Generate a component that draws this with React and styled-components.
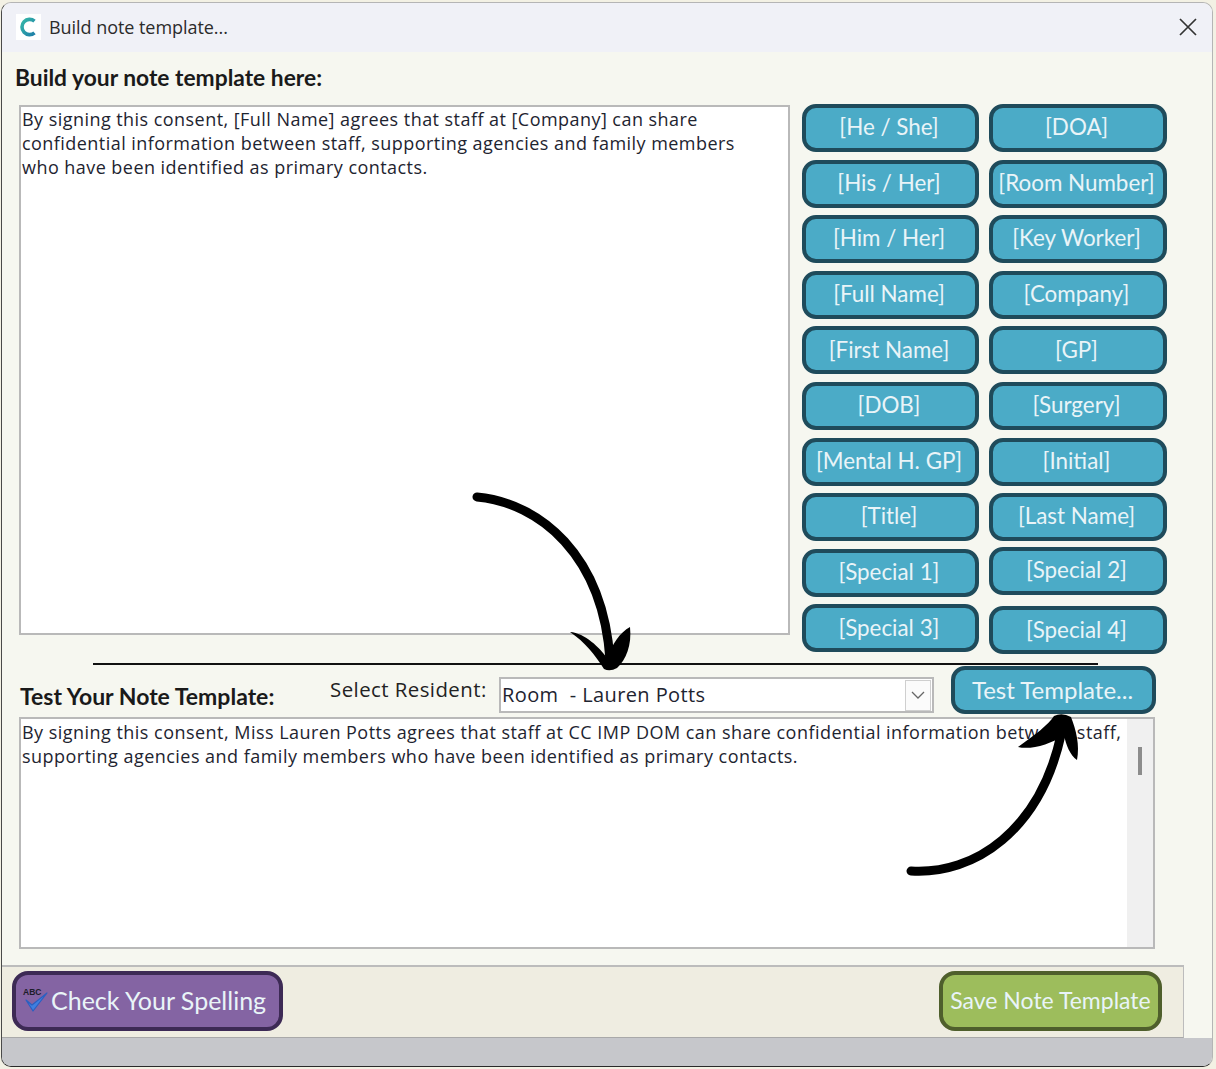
import React from "react";
import styled, { createGlobalStyle } from "styled-components";

const GlobalStyle = createGlobalStyle`
  html, body {
    margin: 0;
    padding: 0;
    background: #f3f1e4;
  }
  #root {
    width: 1216px;
    height: 1069px;
    overflow: hidden;
  }
`;

const UI_FONT = `"Open Sans", "Noto Sans", "Liberation Sans", sans-serif`;
const LABEL_FONT = `Lato, "Liberation Sans", sans-serif`;

/* Window frame */

const Page = styled.div`
  position: relative;
  width: 1216px;
  height: 1069px;
  padding: 2px 3px 2px 1px;
  box-sizing: border-box;
`;

const Window = styled.div`
  display: flex;
  flex-direction: column;
  height: 100%;
  box-sizing: border-box;
  border: 1px solid #b5b5b5;
  border-left: 1px solid #4a4a4a;
  border-bottom: 1px solid #2a2a2a;
  border-radius: 10px;
  overflow: hidden;
  background: #f6f7f0;
`;

const TitleBar = styled.div`
  display: flex;
  align-items: center;
  flex: 0 0 49px;
  box-sizing: border-box;
  padding: 0 14px 2px 14px;
  background: #f0f1f7;
`;

const TitleLogo = styled.div`
  display: flex;
  align-items: center;
  justify-content: center;
  width: 25px;
  height: 26px;
  background: #ffffff;
  margin-right: 8px;
`;

const TitleText = styled.div`
  flex: 1;
  font: 400 18px/24px ${UI_FONT};
  letter-spacing: -0.05px;
  color: #2b2b2b;
`;

const CloseIcon = styled.svg`
  display: block;
  width: 20px;
  height: 20px;
`;

/* Main content */

const Content = styled.div`
  display: flex;
  flex-direction: column;
  padding: 11px 0 0 17px;
`;

const Heading = styled.div`
  font: 700 22.8px/28px ${LABEL_FONT};
  color: #1a1a1a;
  margin-left: -4px;
`;

const EditorRow = styled.div`
  display: flex;
  gap: 12px;
  margin-top: 13px;
`;

const TextBox = styled.div`
  box-sizing: border-box;
  background: #ffffff;
  border: 2px solid #b9b9b9;
  font: 400 18px/24px ${UI_FONT};
  letter-spacing: 0.45px;
  color: #1e2430;
  white-space: pre-line;
`;

const EditorBox = styled(TextBox)`
  flex: 0 0 771px;
  height: 530px;
  margin-top: 1px;
  padding: 0 10px 0 1px;
`;

const TokenGrid = styled.div`
  display: grid;
  grid-template-columns: 177px 178px;
  grid-auto-rows: 48px;
  column-gap: 10px;
  row-gap: 7.6px;
`;

const Pill = styled.div`
  display: flex;
  align-items: center;
  justify-content: center;
  box-sizing: border-box;
  border-style: solid;
  border-width: 4px;
  border-radius: 14px;
  color: #e9f4f8;
  white-space: nowrap;
`;

const TokenButton = styled(Pill)`
  background: #4babc7;
  border-color: #1f4b5b;
  font: 400 22.4px/1 ${LABEL_FONT};
  margin-top: ${(p) => p.$shift || 0}px;
  margin-bottom: ${(p) => -(p.$shift || 0)}px;
  padding: 0 3px 1px 0;
`;

const Divider = styled.div`
  height: 2px;
  width: 1005px;
  margin: 11px 0 0 74px;
  background: #111111;
`;

const TestRow = styled.div`
  display: flex;
  align-items: flex-start;
  margin-top: 1px;
  height: 48px;
`;

const TestHeading = styled.div`
  flex: 0 0 310px;
  margin: 16px 0 0 1px;
  font: 700 23px/28px ${LABEL_FONT};
  color: #1a1a1a;
`;

const FieldLabel = styled.div`
  flex: 0 0 169px;
  margin-top: 11px;
  font: 400 20.4px/24px ${UI_FONT};
  letter-spacing: 0.45px;
  color: #222222;
  white-space: nowrap;
`;

const SelectBox = styled.div`
  display: flex;
  align-items: center;
  justify-content: space-between;
  box-sizing: border-box;
  width: 435px;
  height: 36px;
  margin-top: 11px;
  padding: 0 1px 0 1px;
  background: #ffffff;
  border: 2px solid #b9b9b9;
  font: 400 20px/24px ${UI_FONT};
  letter-spacing: 0.4px;
  color: #1e2430;
  white-space: pre;
`;

const SelectArrow = styled.div`
  display: flex;
  align-items: center;
  justify-content: center;
  box-sizing: border-box;
  width: 26px;
  height: 31px;
  background: #fbfbfb;
  border: 1px solid #cfcfcf;
`;

const RunButton = styled(Pill)`
  width: 205px;
  height: 48px;
  margin-left: 17px;
  background: #4babc7;
  border-color: #1f4b5b;
  font: 400 24px/1 ${LABEL_FONT};
  padding: 0 2px 1px 0;
`;

const ResultBox = styled(TextBox)`
  position: relative;
  width: 1136px;
  height: 232px;
  margin-top: 3px;
  padding: 1px 10px 0 1px;
  letter-spacing: 0.47px;
`;

const ScrollTrack = styled.div`
  position: absolute;
  top: 0;
  right: 0;
  bottom: 0;
  width: 26px;
  background: #f0f0f0;
`;

const ScrollThumb = styled.div`
  position: absolute;
  top: 28px;
  left: 11px;
  width: 4px;
  height: 28px;
  background: #8c8c8c;
`;

/* Footer */

const Footer = styled.div`
  display: flex;
  align-items: flex-start;
  justify-content: space-between;
  flex: 0 0 73px;
  box-sizing: border-box;
  width: 1182px;
  margin-top: 16px;
  margin-left: -17px;
  padding: 4px 21px 0 10px;
  background: #efede1;
  border-top: 2px solid #bcbcbc;
  border-right: 1px solid #bcbcbc;
  border-bottom: 1px solid #a9a9a9;
`;

const SpellButton = styled(Pill)`
  justify-content: flex-start;
  gap: 1px;
  width: 271px;
  height: 60px;
  padding: 0 0 2px 6px;
  background: #8464a3;
  border-color: #3d2a55;
  border-radius: 16px;
  font: 400 25px/1 ${LABEL_FONT};
`;

const SpellGlyph = styled.svg`
  flex: 0 0 28px;
  width: 28px;
  height: 28px;
`;

const SaveButton = styled(Pill)`
  width: 223px;
  height: 60px;
  background: #9dbd5c;
  border-color: #4f5f2c;
  border-radius: 16px;
  font: 400 23px/1 ${LABEL_FONT};
  padding-bottom: 2px;
`;

const StatusBar = styled.div`
  flex: 1;
  background: #c6c7cb;
`;

const ArrowLayer = styled.svg`
  position: absolute;
  top: 0;
  left: 0;
  pointer-events: none;
`;

const tokenButtons = [
  ["[He / She]", 0],
  ["[DOA]", 0],
  ["[His / Her]", 0],
  ["[Room Number]", 0],
  ["[Him / Her]", 0],
  ["[Key Worker]", 0],
  ["[Full Name]", 0],
  ["[Company]", 0],
  ["[First Name]", 0],
  ["[GP]", 0],
  ["[DOB]", 0],
  ["[Surgery]", 0],
  ["[Mental H. GP]", 0],
  ["[Initial]", 0],
  ["[Title]", 0],
  ["[Last Name]", 0],
  ["[Special 1]", 0],
  ["[Special 2]", -2],
  ["[Special 3]", 0],
  ["[Special 4]", 2],
];

const LogoMark = () => (
  <svg width="22" height="22" viewBox="0 0 22 22">
    <defs>
      <linearGradient id="logoFill" x1="0" y1="0" x2="1" y2="1">
        <stop offset="0" stopColor="#35b7a8" />
        <stop offset="1" stopColor="#1f7fa8" />
      </linearGradient>
    </defs>
    <path
      d="M16.5 5.2 A7.6 7.6 0 1 0 16.5 16.8"
      fill="none"
      stroke="url(#logoFill)"
      strokeWidth="3.6"
    />
  </svg>
);

const SpellIcon = () => (
  <SpellGlyph viewBox="0 0 28 28">
    <text
      x="1"
      y="9"
      fontFamily="Liberation Sans, sans-serif"
      fontSize="8.5"
      fontWeight="700"
      fill="#1c1c2a"
    >
      ABC
    </text>
    <path d="M4 14 L10 19 L25 7 L11 25 Z" fill="#3f7fe0" stroke="#2b5fc0" strokeWidth="1.2" strokeLinejoin="round" />
  </SpellGlyph>
);

export default function App() {
  return (
    <>
      <GlobalStyle />
      <Page>
        <Window>
          <TitleBar>
            <TitleLogo>
              <LogoMark />
            </TitleLogo>
            <TitleText>Build note template...</TitleText>
            <CloseIcon viewBox="0 0 20 20">
              <path d="M2 2 L18 18 M18 2 L2 18" stroke="#333" strokeWidth="1.7" fill="none" />
            </CloseIcon>
          </TitleBar>

          <Content>
            <Heading>Build your note template here:</Heading>

            <EditorRow>
              <EditorBox>
                {"By signing this consent, [Full Name] agrees that staff at [Company] can share\nconfidential information between staff, supporting agencies and family members\nwho have been identified as primary contacts."}
              </EditorBox>
              <TokenGrid>
                {tokenButtons.map(([label, shift]) => (
                  <TokenButton key={label} $shift={shift}>
                    {label}
                  </TokenButton>
                ))}
              </TokenGrid>
            </EditorRow>

            <Divider />

            <TestRow>
              <TestHeading>Test Your Note Template:</TestHeading>
              <FieldLabel>Select Resident:</FieldLabel>
              <SelectBox>
                {"Room  - Lauren Potts"}
                <SelectArrow>
                  <svg width="14" height="8" viewBox="0 0 14 8">
                    <path d="M1 1 L7 7 L13 1" fill="none" stroke="#666" strokeWidth="1.3" />
                  </svg>
                </SelectArrow>
              </SelectBox>
              <RunButton>Test Template...</RunButton>
            </TestRow>

            <ResultBox>
              {"By signing this consent, Miss Lauren Potts agrees that staff at CC IMP DOM can share confidential information between staff,\nsupporting agencies and family members who have been identified as primary contacts."}
              <ScrollTrack>
                <ScrollThumb />
              </ScrollTrack>
            </ResultBox>

            <Footer>
              <SpellButton>
                <SpellIcon />
                Check Your Spelling
              </SpellButton>
              <SaveButton>Save Note Template</SaveButton>
            </Footer>
          </Content>

          <StatusBar />
        </Window>

        <ArrowLayer width="1216" height="1069" viewBox="0 0 1216 1069">
          <path d="M477 497 C540 503 603 555 610 660" fill="none" stroke="#000" strokeWidth="9" strokeLinecap="round" />
          <path d="M570 632 C585 633 600 648 607 658 C612 645 620 632 630 627 C632 645 626 660 617 668 Q610 672 604 669 C595 655 585 642 570 632 Z" fill="#000" />
          <path d="M911 871 C975 875 1040 830 1061 735" fill="none" stroke="#000" strokeWidth="9" strokeLinecap="round" />
          <path d="M1018 747 C1035 735 1048 725 1054 716 Q1062 712 1071 717 C1076 730 1080 745 1077 760 C1070 755 1066 745 1064 735 C1050 745 1030 750 1018 747 Z" fill="#000" />
        </ArrowLayer>
      </Page>
    </>
  );
}
